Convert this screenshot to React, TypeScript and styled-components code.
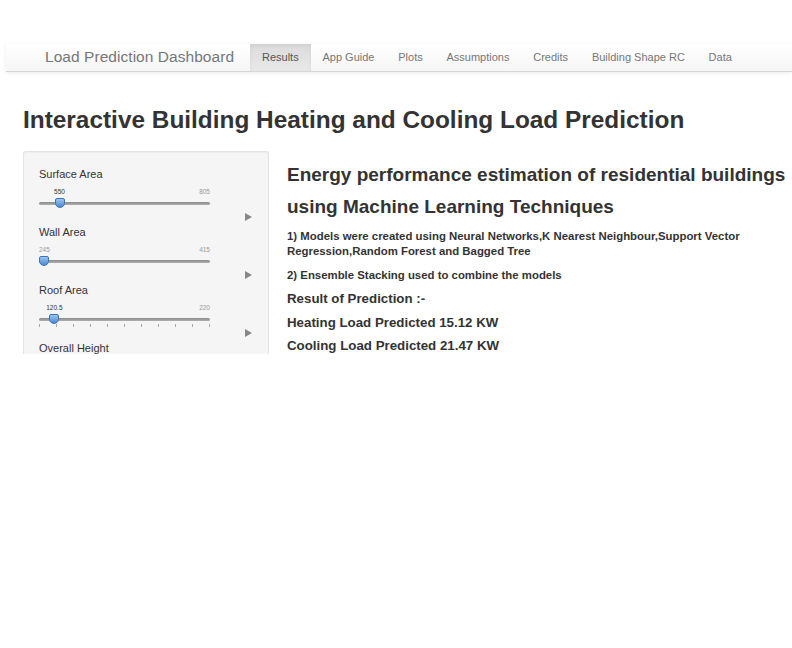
import React from "react";
import styled, { createGlobalStyle } from "styled-components";

const Global = createGlobalStyle`
  html, body { margin: 0; padding: 0; background: #fff; }
  body { font-family: "Liberation Sans", Arial, sans-serif; color: #333; }
`;

const Page = styled.div`
  padding-top: 44px;
`;

const Navbar = styled.nav`
  margin-left: 6px;
  height: 27px;
  display: flex;
  align-items: stretch;
  background: linear-gradient(to bottom, #ffffff 0%, #f6f6f6 100%);
  border-bottom: 1px solid #d6d6d6;
  box-shadow: 0 1px 4px rgba(0, 0, 0, 0.08);
  border-top-left-radius: 2px;
`;

const Brand = styled.div`
  padding: 0 16px 1px 39px;
  display: flex;
  align-items: center;
  font-size: 15.5px;
  color: #777;
  letter-spacing: 0.05px;
`;

const Tab = styled.div<{ $active?: boolean }>`
  display: flex;
  align-items: center;
  padding: 0 11.9px 1px;
  font-size: 11px;
  color: ${(p) => (p.$active ? "#555" : "#777")};
  background: ${(p) =>
    p.$active ? "linear-gradient(to bottom, #dcdcdc 0%, #e8e8e8 100%)" : "transparent"};
  box-shadow: ${(p) => (p.$active ? "inset 0 2px 4px rgba(0,0,0,0.06)" : "none")};
`;

const Container = styled.div`
  padding: 0 23px;
`;

const Title = styled.h1`
  margin: 33px 0 16px;
  font-size: 24.4px;
  font-weight: bold;
  line-height: 30px;
  color: #333;
`;

const Row = styled.div`
  display: flex;
  align-items: flex-start;
  gap: 18px;
`;

const Sidebar = styled.div`
  width: 246px;
  height: 203px;
  box-sizing: border-box;
  overflow: hidden;
  background: #f5f5f5;
  border: 1px solid #e3e3e3;
  border-bottom: none;
  border-radius: 3px 3px 0 0;
  box-shadow: inset 0 1px 1px rgba(0, 0, 0, 0.03);
  padding: 16px 15px 0 15px;
`;

const Field = styled.div`
  display: flex;
  flex-direction: column;
  margin-bottom: 5px;
`;

const Label = styled.div`
  font-size: 11px;
  color: #333;
  line-height: 13px;
  margin-bottom: 5px;
`;

const Slider = styled.div`
  position: relative;
  width: 171px;
  height: 26px;
`;

const MinMax = styled.span<{ $right?: boolean }>`
  position: absolute;
  top: 1.5px;
  ${(p) => (p.$right ? "right: 0;" : "left: 0;")}
  font-size: 6.5px;
  color: #999;
`;

const ValueTag = styled.span`
  position: absolute;
  top: 1.5px;
  transform: translateX(-50%);
  font-size: 6.5px;
  color: #333;
`;

const Track = styled.div`
  position: absolute;
  left: 0;
  right: 0;
  top: 16px;
  height: 3px;
  border-radius: 2px;
  background: linear-gradient(to bottom, #8a8a8a, #b0b0b0);
`;

const Handle = styled.div`
  position: absolute;
  top: 12px;
  width: 10px;
  height: 10px;
  transform: translateX(-50%);
  background: linear-gradient(to bottom, #9cc3ee, #4a8ad4);
  border: 1px solid #3a75bb;
  box-sizing: border-box;
  border-radius: 2px 2px 5px 5px;
`;

const Ticks = styled.div`
  position: absolute;
  left: 0;
  right: 0;
  top: 22px;
  display: flex;
  justify-content: space-between;
`;

const Tick = styled.span`
  width: 1px;
  height: 3px;
  background: #aaa;
`;

const Play = styled.div`
  align-self: flex-end;
  margin: 1px 1px 0 0;
  width: 0;
  height: 0;
  border-top: 4.5px solid transparent;
  border-bottom: 4.5px solid transparent;
  border-left: 7px solid #888;
`;

const Main = styled.div`
  flex: 1;
  padding-top: 8px;
  min-width: 0;
`;

const Heading = styled.h3`
  margin: 0 0 7px;
  font-size: 19px;
  line-height: 31.5px;
  font-weight: bold;
  color: #333;
  white-space: nowrap;
`;

const Note = styled.h5`
  margin: 0 0 9px;
  font-size: 11.4px;
  line-height: 15px;
  font-weight: bold;
  color: #333;
`;

const Results = styled.div`
  margin-top: -5px;
`;

const Result = styled.h4`
  margin: 0;
  font-size: 13.3px;
  line-height: 23.5px;
  font-weight: bold;
  color: #333;
`;

type SliderProps = {
  label: string;
  max: string;
  value: string;
  pos: number;
  ticks?: boolean;
};

function RangeField({ label, max, value, pos, ticks }: SliderProps) {
  const pct = `${pos * 100}%`;
  return (
    <Field>
      <Label>{label}</Label>
      <Slider>
        {pos === 0 ? <MinMax>{value}</MinMax> : <ValueTag style={{ left: pct }}>{value}</ValueTag>}
        <MinMax $right>{max}</MinMax>
        <Track />
        {ticks && (
          <Ticks>
            {Array.from({ length: 11 }).map((_, i) => (
              <Tick key={i} />
            ))}
          </Ticks>
        )}
        <Handle style={{ left: pos === 0 ? "5px" : pct }} />
      </Slider>
      <Play />
    </Field>
  );
}

export default function App() {
  return (
    <Page>
      <Global />
      <Navbar>
        <Brand>Load Prediction Dashboard</Brand>
        <Tab $active>Results</Tab>
        <Tab>App Guide</Tab>
        <Tab>Plots</Tab>
        <Tab>Assumptions</Tab>
        <Tab>Credits</Tab>
        <Tab>Building Shape RC</Tab>
        <Tab>Data</Tab>
      </Navbar>
      <Container>
        <Title>Interactive Building Heating and Cooling Load Prediction</Title>
        <Row>
          <Sidebar>
            <RangeField label="Surface Area" max="805" value="550" pos={0.12} />
            <RangeField label="Wall Area" max="415" value="245" pos={0} />
            <RangeField label="Roof Area" max="220" value="120.5" pos={0.09} ticks />
            <Field>
              <Label>Overall Height</Label>
            </Field>
          </Sidebar>
          <Main>
            <Heading>
              Energy performance estimation of residential buildings
              <br />
              using Machine Learning Techniques
            </Heading>
            <Note>
              1) Models were created using Neural Networks,K Nearest Neighbour,Support Vector
              Regression,Random Forest and Bagged Tree
            </Note>
            <Note>2) Ensemble Stacking used to combine the models</Note>
            <Results>
              <Result>Result of Prediction :-</Result>
              <Result>Heating Load Predicted 15.12 KW</Result>
              <Result>Cooling Load Predicted 21.47 KW</Result>
            </Results>
          </Main>
        </Row>
      </Container>
    </Page>
  );
}
